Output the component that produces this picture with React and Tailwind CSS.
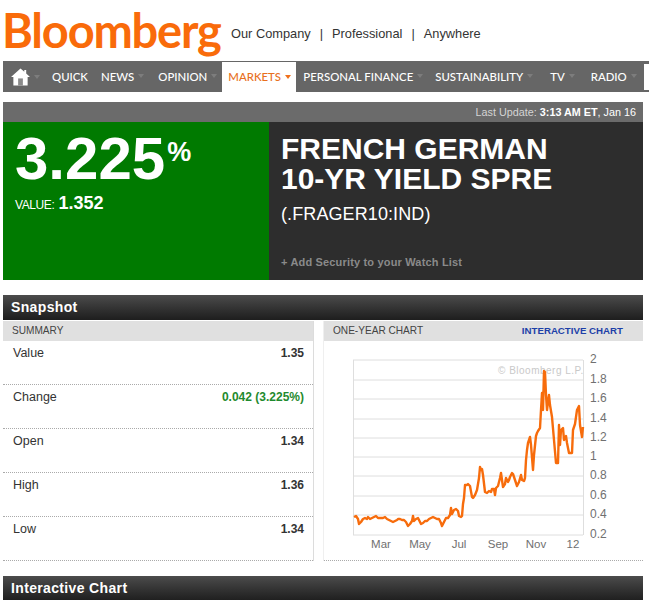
const NAV = [
  { label: "QUICK", left: 12, caret: false },
  { label: "NEWS", left: 13 },
  { label: "OPINION", left: 14 },
];
const NAV_RIGHT = [
  { label: "PERSONAL FINANCE", left: 7 },
  { label: "SUSTAINABILITY", left: 12 },
  { label: "TV", left: 17 },
  { label: "RADIO", left: 16 },
];
const ROWS = [
  { name: "Value", value: "1.35" },
  { name: "Change", value: "0.042 (3.225%)", green: true },
  { name: "Open", value: "1.34" },
  { name: "High", value: "1.36" },
  { name: "Low", value: "1.34" },
];
const GRID = [360, 380, 399, 419, 438, 457, 476, 496, 515, 535];
const Y_LABELS = ["2", "1.8", "1.6", "1.4", "1.2", "1", "0.8", "0.6", "0.4", "0.2"];
const MONTHS = [
  ["Mar", 381],
  ["May", 420],
  ["Jul", 459],
  ["Sep", 498],
  ["Nov", 536],
  ["12", 573],
];
const LINE =
  "354,517 356,516 358,519 359,524 361,522 363,519 365,518 367,519 368,517 370,519 372,518 374,517 376,516 378,518 381,518 383,518 385,517 387,519 389,520 391,521 393,522 395,521 397,520 398,519 400,519 402,520 404,520 406,522 408,526 410,524 412,521 413,516 414,521 416,519 418,518 420,522 421,524 423,523 425,521 427,521 429,519 431,518 433,517 435,518 437,519 439,519 441,523 442,526 444,522 446,518 448,518 450,515 451,508 452,514 454,510 456,509 458,511 459,516 461,517 462,516 463,504 464,498 465,485 467,485 468,484 470,486 472,497 473,498 475,495 477,490 479,478 480,467 481,470 482,469 483,475 485,492 487,493 489,491 491,492 492,489 494,489 495,495 496,488 498,486 500,478 501,473 502,480 503,487 505,484 506,478 508,482 509,480 510,477 512,473 513,474 515,480 517,486 519,482 521,475 522,480 524,481 525,478 526,460 527,450 528,443 530,437 531,445 533,470 534,455 536,436 537,433 538,431 540,428 541,410 542,393 543,410 544,371 545,372 546,395 547,410 548,402 549,395 550,405 552,417 554,440 556,463 558,463 559,425 560,445 561,430 563,428 564,440 566,436 567,443 569,453 572,453 573,430 575,424 577,410 579,406 580,425 582,437 583,427";

function Caret({ color = "border-t-[#7d7d7d]" }) {
  return (
    <span
      className={`ml-[4px] w-0 h-0 border-x-[3.5px] border-x-transparent border-t-[4px] ${color}`}
    />
  );
}

function HomeIcon() {
  return (
    <svg width="19" height="20" viewBox="0 0 20 20">
      <path d="M10 1 L14 4.5 V2.5 H16 V6.3 L20 10 H17.5 V19 H2.5 V10 H0 Z" fill="#fff" />
      <rect x="7.5" y="11.5" width="5" height="7.5" fill="#8a8a8a" />
    </svg>
  );
}

function SectionBar({ title }) {
  return (
    <div className="h-[25px] ml-[3px] mr-[6px] pl-[8px] flex items-center bg-gradient-to-b from-[#4c4c4c] to-[#1e1e1e] text-white text-[14px] font-bold tracking-[0.35px]">
      {title}
    </div>
  );
}

function Chart() {
  return (
    <svg width="319" height="219" viewBox="324 341 319 219" className="block">
      {GRID.map((y) => (
        <line key={y} x1="353" x2="583" y1={y} y2={y} stroke="#dedede" strokeWidth="1" />
      ))}
      <line x1="353.5" x2="353.5" y1="360" y2="535" stroke="#dedede" />
      <line x1="583.5" x2="583.5" y1="360" y2="535" stroke="#dedede" />
      <text x="498" y="374" fontSize="10" letterSpacing="0.5" fill="#c9c9c9">
        © Bloomberg L.P.
      </text>
      <polyline
        points={LINE}
        fill="none"
        stroke="#f76c0c"
        strokeWidth="2.4"
        strokeLinejoin="round"
      />
      {Y_LABELS.map((t, i) => (
        <text key={t} x="590" y={GRID[i] + 3} fontSize="12" fill="#707070">
          {t}
        </text>
      ))}
      {MONTHS.map(([m, x]) => (
        <text key={m} x={x} y="548" textAnchor="middle" fontSize="11.5" fill="#707070">
          {m}
        </text>
      ))}
    </svg>
  );
}

export default function App() {
  return (
    <div className="w-[649px] h-[600px] overflow-hidden bg-white font-['Liberation_Sans',Arial,sans-serif] text-[#333]">
      {/* logo + top links */}
      <div className="h-[61px] flex items-start">
        <div className="ml-[2px] mt-[2px] w-[219px] text-[#f96b0a] text-[47px] leading-[56px] font-bold tracking-[-1.2px] font-['Lato',sans-serif] whitespace-nowrap">
          Bloomberg
        </div>
        <div className="ml-[10px] mt-[26px] flex items-center text-[12.8px] leading-[16px] text-[#333]">
          <span>Our Company</span>
          <span className="mx-[9px]">|</span>
          <span>Professional</span>
          <span className="mx-[9px]">|</span>
          <span>Anywhere</span>
        </div>
      </div>

      {/* nav */}
      <div className="h-[31px] ml-[3px] flex items-center bg-[#666] text-white text-[11.4px] font-medium font-['Lato',sans-serif] whitespace-nowrap">
        <div className="ml-[8px] flex items-center">
          <HomeIcon />
          <Caret />
        </div>
        {NAV.map((n) => (
          <div key={n.label} className="flex items-center" style={{ marginLeft: n.left }}>
            <span>{n.label}</span>
            {n.caret !== false && <Caret />}
          </div>
        ))}
        <div className="ml-[5px] w-[74px] h-[30px] mt-[1px] pl-[6px] flex items-center bg-white text-[#e8701e]">
          <span>MARKETS</span>
          <Caret color="border-t-[#f0701c]" />
        </div>
        {NAV_RIGHT.map((n) => (
          <div key={n.label} className="flex items-center" style={{ marginLeft: n.left }}>
            <span>{n.label}</span>
            <Caret />
          </div>
        ))}
        <div className="ml-auto w-[5px] h-[26px] bg-white" />
      </div>

      {/* quote */}
      <div className="mt-[10px] ml-[3px] mr-[6px]">
        <div className="h-[20px] pr-[7px] flex items-center justify-end bg-[#6b6b6b] text-[10.8px] text-[#d4d4d4]">
          <span>Last Update:&nbsp;</span>
          <span className="font-bold text-white">3:13 AM ET</span>
          <span className="text-white">, Jan 16</span>
        </div>
        <div className="h-[158px] flex">
          <div className="w-[266px] bg-[#007a00] text-white pl-[12px] pt-[3px]">
            <div className="flex items-start">
              <span className="text-[60px] leading-[68px] font-bold">3.225</span>
              <span className="text-[27px] leading-[32px] font-bold mt-[11px] ml-[2px]">%</span>
            </div>
            <div className="flex items-baseline -mt-[1px]">
              <span className="text-[12px] tracking-[-0.4px]">VALUE:</span>
              <span className="ml-[4px] text-[18px] leading-[22px] font-bold">1.352</span>
            </div>
          </div>
          <div className="flex-1 bg-[#2d2d2d] pl-[12px] pt-[12px] flex flex-col">
            <div className="text-white text-[30px] leading-[30px] font-bold">
              FRENCH GERMAN
              <br />
              10-YR YIELD SPRE
            </div>
            <div className="mt-[9px] text-white text-[18px] leading-[22px] tracking-[0.1px]">(.FRAGER10:IND)</div>
            <div className="mt-auto mb-[11px] text-[#8a8a8a] text-[11px] leading-[14px] font-bold tracking-[0.17px]">
              + Add Security to your Watch List
            </div>
          </div>
        </div>
      </div>

      <div className="mt-[15px]">
        <SectionBar title="Snapshot" />
      </div>

      {/* snapshot panels */}
      <div className="mt-[1px] ml-[3px] mr-[6px] flex">
        <div className="w-[312px] border-r border-[#dcdcdc]">
          <div className="h-[20px] pl-[9px] flex items-center bg-[#e0e0e0] text-[10.1px] text-[#444]">
            SUMMARY
          </div>
          {ROWS.map((r) => (
            <div
              key={r.name}
              className="h-[44px] pl-[10px] pr-[9px] pt-[4px] flex justify-between border-b border-dotted border-[#aaa] text-[12px] leading-[16px]"
            >
              <span className="text-[#333] text-[12.5px]">{r.name}</span>
              <span className={r.green ? "font-bold text-[#1f8a2e]" : "font-bold text-[#333]"}>
                {r.value}
              </span>
            </div>
          ))}
        </div>
        <div className="ml-[9px] flex-1 border-l border-[#efefef]">
          <div className="h-[20px] pl-[9px] pr-[20px] flex items-center justify-between bg-[#e0e0e0] text-[10.1px] text-[#444]">
            <span>ONE-YEAR CHART</span>
            <span className="text-[#1d3fa8] font-bold text-[9.7px]">INTERACTIVE CHART</span>
          </div>
          <div className="border-b border-dotted border-[#aaa]">
            <Chart />
          </div>
        </div>
      </div>

      <div className="mt-[15px]">
        <SectionBar title="Interactive Chart" />
      </div>
    </div>
  );
}
